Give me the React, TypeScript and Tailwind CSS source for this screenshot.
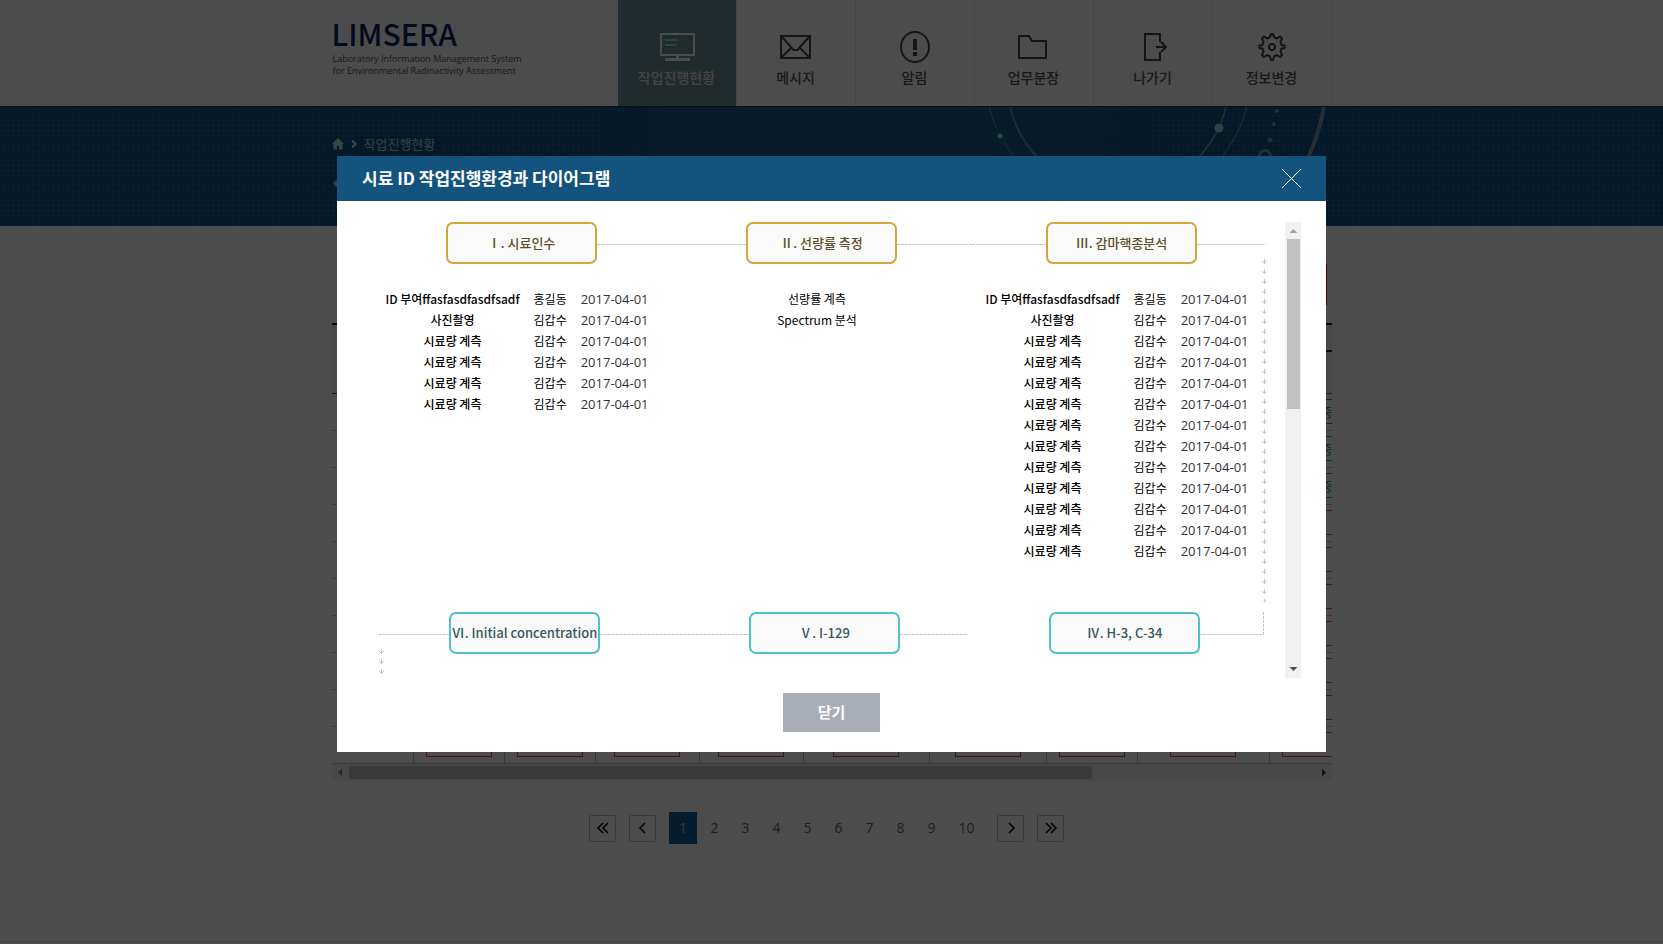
import type { ReactNode } from "react";

type Step = { name: string; person?: string; date?: string };

const measured = (count: number): Step[] => [
  { name: "ID 부여ffasfasdfasdfsadf", person: "홍길동", date: "2017-04-01" },
  { name: "사진촬영", person: "김갑수", date: "2017-04-01" },
  ...Array.from({ length: count }, () => ({ name: "시료량 계측", person: "김갑수", date: "2017-04-01" })),
];

const SAMPLE_STEPS = measured(4);
const GAMMA_STEPS = measured(11);
const DOSE_STEPS: Step[] = [{ name: "선량률 계측" }, { name: "Spectrum 분석" }];

function MonitorIcon() {
  return (
    <svg width="36" height="30" viewBox="0 0 36 30" fill="none" shapeRendering="crispEdges">
      <rect x="2" y="2" width="33" height="21" stroke="#fff" strokeWidth="2" />
      <path d="M18.500 24v3M6 27.500h25" stroke="#fff" strokeWidth="3" />
      <path d="M6 8h13M6 13h11" stroke="#8ce8d8" strokeWidth="2" />
    </svg>
  );
}

function MailIcon() {
  return (
    <svg width="36" height="30" viewBox="0 0 36 30" fill="none" stroke="#484848" strokeWidth="2">
      <rect x="3" y="4" width="29" height="22" />
      <path d="M3.500 4.500L15.500 18h4L31.500 4.500M3.500 25.500L13 16M31.500 25.500L22 16" />
    </svg>
  );
}

function AlertIcon() {
  return (
    <svg width="32" height="32" viewBox="0 0 32 32" fill="none">
      <ellipse cx="16" cy="16" rx="14" ry="15" stroke="#484848" strokeWidth="2" />
      <path d="M16 8v11M16 21v4" stroke="#484848" strokeWidth="4" />
    </svg>
  );
}

function FolderIcon() {
  return (
    <svg width="36" height="30" viewBox="0 0 36 30" fill="none" stroke="#484848" strokeWidth="2">
      <path d="M3 4h10l3 5h14v17H3z" />
    </svg>
  );
}

function ExitIcon() {
  return (
    <svg width="30" height="30" viewBox="0 0 30 30" fill="none" stroke="#484848" strokeWidth="2">
      <path d="M22 10V2H7v26h15v-8M18 15h10M23 10l5 5-5 5" />
    </svg>
  );
}

function GearIcon() {
  return (
    <svg width="28" height="30" viewBox="0 0 28 30" fill="none" stroke="#484848" strokeWidth="2">
      <path
        strokeLinejoin="round"
        d="M12 5l1-3h2l1 3 3 1.500 3-2 2 2-1.500 3 1 3.500 3 .5v2.500l-3 .5-1 3.500 1.500 3-2 2-3-2-3 1.500-1 3.500h-2l-1-3.500-3-1.500-3 2-2-2 1.500-3-1-3.500-3-.5v-2.500l3-.5 1-3.500-1.500-3 2-2 3 2z"
      />
      <circle cx="14" cy="15" r="3" />
    </svg>
  );
}

const NAV: { label: string; icon: ReactNode; active?: boolean }[] = [
  { label: "작업진행현황", icon: <MonitorIcon />, active: true },
  { label: "메시지", icon: <MailIcon /> },
  { label: "알림", icon: <AlertIcon /> },
  { label: "업무분장", icon: <FolderIcon /> },
  { label: "나가기", icon: <ExitIcon /> },
  { label: "정보변경", icon: <GearIcon /> },
];

function Header() {
  return (
    <header className="h-[106px] bg-white">
      <div className="mx-auto flex h-full w-full max-w-[1000px] justify-between">
        <a href="#home" className="block pt-[17px] text-[#082264]">
          <span className="block text-[30px] leading-[32px] font-medium">LIMSERA</span>
          <span className="mt-[4px] block pl-[1px] font-['Open_Sans','Noto_Sans',sans-serif] text-[9px] leading-[12px] text-[#555]">
            Laboratory Information Management System
            <br />
            for Environmental Radioactivity Assessment
          </span>
        </a>
        <nav className="flex">
          {NAV.map((item) => (
            <a
              key={item.label}
              href="#menu"
              className={
                item.active
                  ? "flex w-[119px] flex-col items-center border-r border-[#e6e6e6] bg-[#718c93] pt-[30px] text-[#e8e8e8]"
                  : "flex w-[119px] flex-col items-center border-r border-[#e6e6e6] pt-[30px] text-[#555]"
              }
            >
              <span className="flex h-[34px] items-center">{item.icon}</span>
              <span className="mt-[3px] text-[14px] leading-[20px] font-medium">{item.label}</span>
            </a>
          ))}
        </nav>
      </div>
    </header>
  );
}

function Banner() {
  return (
    <div className="h-[120px] border-t border-[#0d3f63] bg-[#155b90] bg-[linear-gradient(to_right,transparent_35%,#155b90_40%,#155b90_66%,transparent_70%),repeating-linear-gradient(to_right,rgba(10,70,110,0.4)_0_2px,transparent_2px_5px),repeating-linear-gradient(to_bottom,rgba(10,70,110,0.4)_0_2px,transparent_2px_5px)]">
      <div className="relative mx-auto h-full w-full max-w-[1000px]">
        <svg className="absolute top-0 right-0" width="350" height="119" viewBox="0 0 350 119" fill="none" stroke="#8299ab">
          <circle cx="136" cy="-26" r="111" strokeWidth="1.500" />
          <circle cx="136" cy="-33" r="133" strokeWidth="1" />
          <circle cx="137" cy="-36" r="208" strokeWidth="4" strokeDasharray="210 1100" />
          <circle cx="237" cy="21" r="4.500" fill="#93e3e3" stroke="none" />
          <circle cx="18" cy="29" r="8" fill="#186a85" stroke="none" />
          <circle cx="18" cy="29" r="2.500" fill="#93e3e3" stroke="none" />
          <circle cx="295" cy="4" r="2" fill="#8299ab" stroke="none" />
          <circle cx="292" cy="17" r="2" fill="#8299ab" stroke="none" />
          <circle cx="288" cy="33" r="2.500" fill="#8299ab" stroke="none" />
          <circle cx="283" cy="49" r="5.500" strokeWidth="3" />
        </svg>
        <div className="flex items-center gap-[7px] pt-[27px] text-[13px] leading-[20px] text-[#a6dcd8]">
          <svg width="12" height="12" viewBox="0 0 12 12" fill="#bfe8dc">
            <path d="M6 0l6 6h-1.500v5.500H7V8H5v3.500H1.500V6H0z" />
          </svg>
          <svg width="6" height="8" viewBox="0 0 6 8" fill="none" stroke="#e4eee9" strokeWidth="2">
            <path d="M1 .5L4.500 4 1 7.500" />
          </svg>
          <a href="#status">작업진행현황</a>
        </div>
        <svg className="mt-[20px]" width="20" height="14" viewBox="0 0 20 14" fill="#bcc8c8">
          <path d="M1 9l8-8h10v12H4z" />
        </svg>
      </div>
    </div>
  );
}

function StatusRow({ done }: { done: boolean }) {
  const box = done
    ? "mx-auto block h-[25px] w-[66px] border border-[#1b96a0] text-[13px] leading-[23px] text-[#1b96a0]"
    : "mx-auto block h-[25px] w-[66px] border border-[#ee4433]";
  return (
    <tr className="h-[37px]">
      <td className="border-b border-[#bbb]" />
      {Array.from({ length: 9 }, (_, i) => (
        <td key={i} className="border-b border-l border-[#bbb] px-0 pt-[5px] pb-0 text-center align-top">
          <span className={box}>{done && i === 8 ? "진행중" : ""}</span>
        </td>
      ))}
    </tr>
  );
}

function StatusTable() {
  return (
    <section className="mx-auto w-full max-w-[1000px] pt-[38px]">
      <div className="flex h-[41px] justify-end pr-[5px]">
        <button type="button" aria-label="조회" className="w-[90px] bg-[#e60000]" />
      </div>
      <div className="mt-[18px] overflow-hidden">
        <table className="w-[1028px] table-fixed border-separate border-spacing-0">
          <colgroup>
            <col className="w-[81px]" />
            <col className="w-[91px]" />
            <col className="w-[91px]" />
            <col className="w-[104px]" />
            <col className="w-[104px]" />
            <col className="w-[126px]" />
            <col className="w-[117px]" />
            <col className="w-[91px]" />
            <col className="w-[132px]" />
            <col className="w-[91px]" />
          </colgroup>
          <thead className="bg-[#f0f0f0]">
            <tr className="h-[29px]">
              <th rowSpan={2} className="border-t-2 border-b border-t-[#14204f] border-b-[#555]" />
              <th colSpan={9} className="border-t-2 border-b-2 border-[#14204f]" />
            </tr>
            <tr className="h-[42px]">
              <th colSpan={9} className="border-b border-[#1b7078]" />
            </tr>
          </thead>
          <tbody>
            {Array.from({ length: 10 }, (_, i) => (
              <StatusRow key={i} done={i < 3} />
            ))}
          </tbody>
        </table>
      </div>
      <div className="flex h-[17px] items-center bg-[#f1f1f1]">
        <svg width="17" height="17" viewBox="0 0 17 17" fill="#888">
          <path d="M10 4.500v8l-4-4z" />
        </svg>
        <div className="h-[13px] w-[743px] bg-[#c1c1c1]" />
        <svg className="ml-auto" width="17" height="17" viewBox="0 0 17 17" fill="#444">
          <path d="M7 4.500v8l4-4z" />
        </svg>
      </div>
    </section>
  );
}

function PageButton({ label, d }: { label: string; d: string }) {
  return (
    <button type="button" aria-label={label} className="flex size-[27px] items-center justify-center rounded-[2px] border border-[#bbb]">
      <svg width="14" height="12" viewBox="0 0 14 12" fill="none" stroke="#000" strokeWidth="1.500">
        <path d={d} />
      </svg>
    </button>
  );
}

function Pagination() {
  return (
    <nav className="mt-[31px] flex items-center justify-center pr-[10px] font-['Open_Sans','Noto_Sans_CJK_KR',sans-serif] text-[14px] leading-[20px] text-[#666]">
      <div className="flex gap-[13px]">
        <PageButton label="처음" d="M7 1L2 6l5 5M12 1L7 6l5 5" />
        <PageButton label="이전" d="M9 1L4 6l5 5" />
      </div>
      <a href="#p1" aria-current="page" className="mr-[2px] ml-[13px] flex h-[32px] w-[28px] items-center justify-center bg-[#155b90] text-[#ccc]">
        1
      </a>
      {[2, 3, 4, 5, 6, 7, 8, 9].map((n) => (
        <a key={n} href="#page" className="w-[31px] text-center">
          {n}
        </a>
      ))}
      <a href="#p10" className="w-[39px] text-center">
        10
      </a>
      <div className="ml-[11px] flex gap-[13px]">
        <PageButton label="다음" d="M5 1l5 5-5 5" />
        <PageButton label="마지막" d="M2 1l5 5-5 5M7 1l5 5-5 5" />
      </div>
    </nav>
  );
}

function Line({ className }: { className: string }) {
  return (
    <span className={`mt-[2px] h-px bg-[repeating-linear-gradient(to_right,#c4c4c4_0_3px,transparent_3px_4px)] ${className}`} />
  );
}

function Arrows({ id, height, className }: { id: string; height: number; className: string }) {
  return (
    <svg className={`absolute ${className}`} width="5" height={height} shapeRendering="crispEdges" aria-hidden="true">
      <defs>
        <pattern id={id} width="5" height="10" patternUnits="userSpaceOnUse">
          <path fill="#c4c4c4" d="M2 0h1v5h-1zM0 2h1v1h-1zM4 2h1v1h-1zM1 3h1v1h-1zM3 3h1v1h-1z" />
        </pattern>
      </defs>
      <rect width="5" height={height} fill={`url(#${id})`} />
    </svg>
  );
}

function Stage({ children, tone }: { children: ReactNode; tone: "gold" | "teal" }) {
  return (
    <h3
      className={
        tone === "gold"
          ? "flex h-[42px] w-[151px] shrink-0 items-center justify-center rounded-[7px] border-2 border-[#d3a53c] bg-[#fafafa] text-[13px] font-medium whitespace-nowrap text-[#5e4e27]"
          : "flex h-[42px] w-[151px] shrink-0 items-center justify-center rounded-[7px] border-2 border-[#4fc1c8] bg-[#fafafa] text-[13px] font-medium whitespace-nowrap text-[#35585c]"
      }
    >
      {children}
    </h3>
  );
}

function StepTable({ steps }: { steps: Step[] }) {
  return (
    <div className="mt-[24px] flex w-[290px] justify-center">
      <table className="text-center text-[12px] leading-[18px] text-black">
        <tbody>
          {steps.map((s, i) => (
            <tr key={i} className="h-[21px]">
              {s.person ? (
                <>
                  <th scope="row" className="px-[7px] py-0 font-medium whitespace-nowrap">
                    {s.name}
                  </th>
                  <td className="px-[7px] py-0 whitespace-nowrap">{s.person}</td>
                  <td className="px-[7px] py-0 font-['Open_Sans',sans-serif] text-[13px] whitespace-nowrap text-[#333]">{s.date}</td>
                </>
              ) : (
                <td className="px-[7px] py-0 whitespace-nowrap">{s.name}</td>
              )}
            </tr>
          ))}
        </tbody>
      </table>
    </div>
  );
}

function Diagram() {
  return (
    <div className="min-w-0 flex-1 overflow-hidden">
      <div className="relative flex h-[390px] pl-[10px]">
        <section className="w-[300px] shrink-0">
          <div className="flex items-center pl-[74px]">
            <Stage tone="gold">Ⅰ. 시료인수</Stage>
            <Line className="flex-1" />
          </div>
          <StepTable steps={SAMPLE_STEPS} />
        </section>
        <section className="w-[300px] shrink-0">
          <div className="flex items-center">
            <Line className="w-[74px]" />
            <Stage tone="gold">Ⅱ. 선량률 측정</Stage>
            <Line className="flex-1" />
          </div>
          <StepTable steps={DOSE_STEPS} />
        </section>
        <section className="relative w-[300px] shrink-0">
          <div className="flex items-center pr-[6px]">
            <Line className="w-[74px]" />
            <Stage tone="gold">Ⅲ. 감마핵종분석</Stage>
            <Line className="flex-1" />
          </div>
          <StepTable steps={GAMMA_STEPS} />
          <Arrows id="arrows-down-right" height={343} className="top-[37px] right-[5px]" />
        </section>
      </div>
      <div className="relative flex items-center pl-[17px]">
        <Line className="w-[70px]" />
        <Stage tone="teal">Ⅵ. Initial concentration</Stage>
        <Line className="w-[149px]" />
        <Stage tone="teal">Ⅴ. I-129</Stage>
        <Line className="mr-[81px] w-[68px]" />
        <Stage tone="teal">Ⅳ. H-3, C-34</Stage>
        <svg className="self-start" width="64" height="23" fill="none" stroke="#c4c4c4" strokeDasharray="3 1" aria-hidden="true">
          <path d="M63.500 0v22.500H0" />
        </svg>
        <Arrows id="arrows-down-left" height={25} className="top-[37px] left-[17px]" />
      </div>
    </div>
  );
}

function Modal() {
  return (
    <div className="fixed inset-0 bg-black/70 px-4 pt-[156px]">
      <div role="dialog" aria-modal="true" aria-labelledby="dialog-title" className="mx-auto w-full max-w-[989px] bg-white pb-[20px]">
        <div className="flex h-[45px] items-center justify-between bg-[#15537f] px-[25px]">
          <h2 id="dialog-title" className="pb-[2px] text-[17px] leading-[24px] font-bold text-white">
            시료 ID 작업진행환경과 다이어그램
          </h2>
          <button type="button" aria-label="창 닫기">
            <svg width="19" height="19" viewBox="0 0 19 19" stroke="#fff" strokeWidth="1">
              <path d="M0 0l19 19M19 0L0 19" />
            </svg>
          </button>
        </div>
        <div className="mx-[25px] mt-[21px] flex h-[456px]">
          <Diagram />
          <div className="flex w-[16px] flex-col items-center bg-[#f1f1f1]">
            <svg width="16" height="17" viewBox="0 0 16 17" fill="#a3a3a3">
              <path d="M4.500 11h8l-4-4z" />
            </svg>
            <div className="h-[170px] w-[13px] bg-[#c1c1c1]" />
            <svg className="mt-auto" width="16" height="17" viewBox="0 0 16 17" fill="#505050">
              <path d="M4.500 6h8l-4 4z" />
            </svg>
          </div>
        </div>
        <div className="mt-[15px] flex justify-center">
          <button type="button" className="h-[39px] w-[97px] bg-[#a9aeb6] text-[15px] font-bold text-white">
            닫기
          </button>
        </div>
      </div>
    </div>
  );
}

export default function App() {
  return (
    <div className="flex min-h-screen flex-col bg-white font-['Noto_Sans_CJK_KR',sans-serif]">
      <Header />
      <Banner />
      <main>
        <StatusTable />
        <Pagination />
      </main>
      <footer className="mt-auto h-[3px] border-t border-[#ddd]" />
      <Modal />
    </div>
  );
}
